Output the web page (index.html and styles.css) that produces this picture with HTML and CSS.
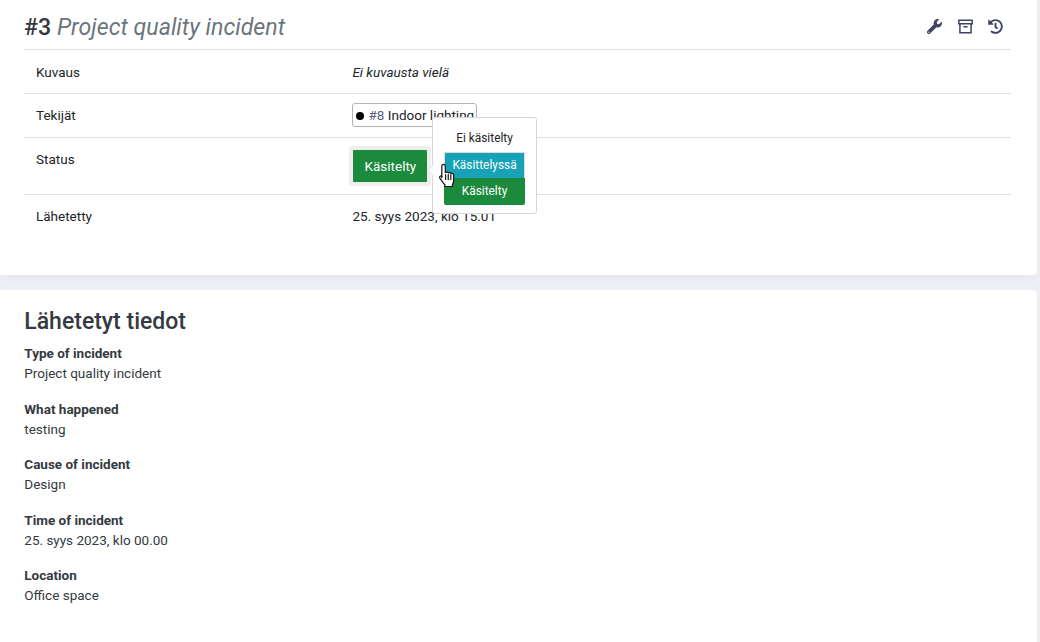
FILE: index.html
```html
<!DOCTYPE html>
<html lang="fi">
<head>
<meta charset="utf-8">
<title>#3 Project quality incident</title>
<link rel="stylesheet" href="styles.css">
</head>
<body>
<main class="page">
  <section class="card card-top">
    <header class="head">
      <h1 class="title"><span class="num">#3</span> <em class="name">Project quality incident</em></h1>
      <div class="tools">
        <svg class="icon" viewBox="0 0 512 512"><path d="M507.7 109.1c-2.200-9-13.400-12-20-5.500l-74.400 74.400-67.900-11.300-11.300-67.900 74.400-74.400c6.600-6.600 3.400-17.800-5.700-20.100-47.400-11.700-99.500 1-136.500 38-39.600 39.600-51.100 96.700-35.300 146.400L18.700 402.800c-25 25-25 65.500 0 90.500s65.500 25 90.500 0l213.100-213.100c49.800 15.800 106.800 4.200 146.400-35.400 37.100-37.100 49.800-89.300 39-135.700zM64 472c-13.300 0-24-10.700-24-24s10.700-24 24-24 24 10.700 24 24-10.700 24-24 24z"/></svg>
        <svg class="icon" viewBox="0 0 18 18"><path class="line" d="M1 1.500h16v4.300H1zM2.300 5.800v10.700h13.400V5.800M6.500 9.300h5"/></svg>
        <svg class="icon" viewBox="0 0 512 512"><path d="M504 255.531c.253 136.640-111.180 248.372-247.820 248.468-59.015.042-113.223-20.530-155.822-54.911-11.077-8.940-11.905-25.541-1.839-35.607l11.267-11.267c8.609-8.609 22.353-9.551 31.891-1.984C173.062 425.135 212.781 440 256 440c101.705 0 184-82.311 184-184 0-101.705-82.311-184-184-184-48.814 0-93.149 18.969-126.068 49.932l50.754 50.754c10.080 10.080 2.941 27.314-11.313 27.314H24c-8.837 0-16-7.163-16-16V38.627c0-14.254 17.234-21.393 27.314-11.314l49.372 49.372C129.209 34.136 189.552 8 256 8c136.810 0 247.747 110.780 248 247.531zm-180.912 78.784l9.823-12.630c8.138-10.463 6.253-25.542-4.210-33.679L288 256.349V152c0-13.255-10.745-24-24-24h-16c-13.255 0-24 10.745-24 24v135.651l65.409 50.874c10.463 8.137 25.541 6.253 33.679-4.210z"/></svg>
      </div>
    </header>
    <div class="row row-a"><div class="label">Kuvaus</div><div class="value"><em>Ei kuvausta vielä</em></div></div>
    <div class="row row-a"><div class="label">Tekijät</div><div class="value"><span class="tag"><i class="dot"></i><span class="tag-num">#8</span> Indoor lighting</span></div></div>
    <div class="row row-status">
      <div class="label">Status</div>
      <div class="value"><button class="status" type="button">Käsitelty</button></div>
    </div>
    <div class="row row-sent"><div class="label">Lähetetty</div><div class="value">25. syys 2023, klo 15.01</div></div>
    <div class="pop">
      <i class="pop-arrow"></i>
      <div class="opt opt-plain">Ei käsitelty</div>
      <div class="opt opt-blue">Käsittelyssä</div>
      <div class="opt opt-green">Käsitelty</div>
    </div>
    <svg class="cursor" viewBox="0 0 20 26" preserveAspectRatio="none"><path d="M5.800 1.500c1.100 0 1.900.8 1.900 1.900v6.800l.6-.1c.9-.7 2.300-.5 2.800.4 1-.6 2.300-.3 2.800.7 1.100-.5 2.500.2 2.600 1.700v5.600c0 1.800-.6 2.800-1.300 4.200v2.300H7.300v-1.800c-1.300-1.400-4.200-5.400-5.200-6.900-1.200-1.900 1-3.300 2.300-2l-.4.600V3.400c0-1.100.8-1.900 1.800-1.900z"/><path class="cursor-lines" d="M8 12v6M10.800 12v6M13.500 12v6"/></svg>
  </section>
  <section class="card card-bottom">
    <h2 class="sub">Lähetetyt tiedot</h2>
    <dl class="facts">
      <div class="fact"><dt>Type of incident</dt><dd>Project quality incident</dd></div>
      <div class="fact"><dt>What happened</dt><dd>testing</dd></div>
      <div class="fact"><dt>Cause of incident</dt><dd>Design</dd></div>
      <div class="fact"><dt>Time of incident</dt><dd>25. syys 2023, klo 00.00</dd></div>
      <div class="fact"><dt>Location</dt><dd>Office space</dd></div>
    </dl>
  </section>
</main>
</body>
</html>
```
FILE: styles.css
```css
* { box-sizing: border-box; }
html, body { margin: 0; height: 100%; overflow: hidden; }
body {
  background: #eeeef5;
  font-family: Roboto, "Liberation Sans", sans-serif;
  font-size: 13.500px;
  line-height: 20px;
  color: #212529;
}
.page { display: flex; flex-direction: column; gap: 15px; width: 1037px; height: 642px; }
.card { background: #fff; }
.card-top {
  position: relative;
  height: 275px;
  padding: 0 26px 0 24px;
  border-radius: 0 0 4px 0;
  box-shadow: 0 5px 12px -5px rgba(50, 50, 80, .07);
}
.card-bottom { flex: 1; padding: 19px 24.300px 0; border-radius: 0 4px 0 0; }
.head {
  display: flex;
  justify-content: space-between;
  height: 50px;
  border-bottom: 1px solid #dee2e6;
  padding-top: 12px;
}
.title { margin: 0; font-size: 23.200px; line-height: 30px; font-weight: 400; color: #343a40; }
.num { font-weight: 500; }
.name { color: #6c757d; }
.tools { display: flex; gap: 15.500px; padding: 7px 8px 0 0; }
.icon { width: 15px; height: 15px; fill: #3e4265; }
.line { fill: none; stroke: #3e4265; stroke-width: 1.800; }
.row {
  display: flex;
  border-bottom: 1px solid #dee2e6;
  padding: 12px 12px 0;
}
.row-a { height: 44px; }
.row-a + .row-a { padding-top: 11px; }
.row-status { height: 57px; padding-top: 11px; }
.row-sent { height: 44px; padding-top: 11px; border-bottom: 0; }
.label { width: 316.400px; }
.value { color: #212529; }
.tag {
  display: flex;
  align-items: center;
  height: 24px;
  padding: 0 3px;
  margin-top: -2px;
  width: 125px;
  white-space: nowrap;
  border: 1px solid #adb5bd;
  border-radius: 3px;
}
.dot { flex: none; width: 8px; height: 8px; margin: 1px 4px 0 0; border-radius: 50%; background: #000; }
.tag-num { color: #5c6280; margin-right: 3.500px; }
.status {
  display: block;
  width: 74px;
  height: 32px;
  margin: 1px 0 0 1px;
  border: 0;
  border-radius: 1px;
  background: #1c8a3c;
  color: #fff;
  font: 13.500px/20px Roboto, sans-serif;
  box-shadow: 0 0 0 4px #eeeeee;
}
.pop {
  position: absolute;
  left: 432px;
  top: 117px;
  width: 105px;
  height: 97px;
  padding: 10px 11px;
  background: #fff;
  border: 1px solid #d5d7da;
  border-radius: 3px;
  font-size: 11.880px;
  line-height: 20px;
  text-align: center;
}
.pop-arrow {
  position: absolute;
  left: -4.500px;
  top: 47.500px;
  width: 9px;
  height: 9px;
  background: #fff;
  border-left: 1px solid #e4e6e8;
  border-bottom: 1px solid #e4e6e8;
  transform: rotate(45deg);
}
.opt { width: 81px; }
.opt-plain { color: #212529; height: 24px; }
.opt-blue {
  background: #17a2b8;
  color: #fff;
  height: 26px;
  line-height: 24px;
  border: 1px solid #d8dde0;
  border-bottom: 0;
}
.opt-green { background: #1c8a3c; color: #fff; border-radius: 0 0 2px 2px; height: 27px; line-height: 26px; }
.cursor { position: absolute; left: 438px; top: 162.500px; width: 19px; height: 24.500px; fill: #fff; stroke: #1a1a1a; stroke-width: 1.300; }
.cursor-lines { fill: none; }
.sub { margin: 0 0 8px; font-size: 23px; line-height: 26px; font-weight: 500; color: #343a40; }
.facts { margin: 0; display: flex; flex-direction: column; gap: 15.500px; }
dt { font-weight: 700; color: #343a40; }
dd { margin: 0; color: #343a40; }
```
